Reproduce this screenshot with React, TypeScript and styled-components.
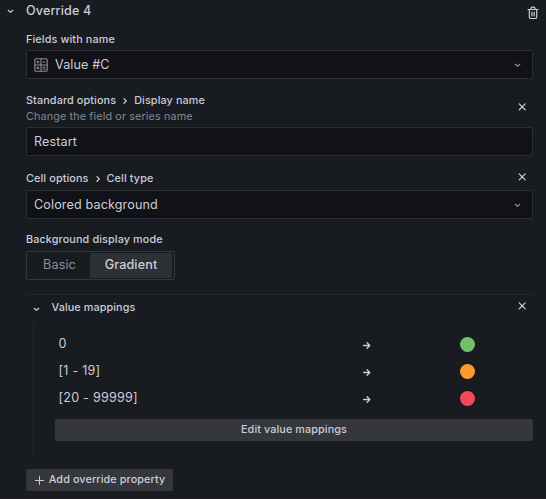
import React from "react";
import styled, { createGlobalStyle } from "styled-components";

const Global = createGlobalStyle`
  * { box-sizing: border-box; }
  body {
    margin: 0;
    background: #181b1f;
    color: #ccccdc;
    font-family: Inter, "Liberation Sans", sans-serif;
    font-size: 12.6px;
    letter-spacing: 0.01em;
  }
  button { font: inherit; letter-spacing: inherit; color: inherit; border: 0; padding: 0; background: none; }
  svg { display: block; flex: none; fill: none; stroke: currentColor; stroke-linecap: round; stroke-linejoin: round; }
`;

const Panel = styled.main`
  height: 499px;
  padding: 0 13px 0 26px;
  border-bottom: 1px solid #231f29;
  overflow: hidden;
`;

const Header = styled.header`
  display: flex;
  align-items: center;
  height: 21px;
  margin-left: -21px;
  font-weight: 500;
  > svg { margin-right: 10px; }
`;

const HeaderAction = styled.button`
  margin: 4px -6px 0 auto;
`;

const Label = styled.div<{ $top: number }>`
  display: flex;
  align-items: center;
  height: 16px;
  margin-top: ${(p) => p.$top}px;
  font-size: 10.8px;
  font-weight: 500;
  letter-spacing: 0.012em;
  svg { margin: 1px 2px 0 4px; }
`;

const PropertyHead = styled.div<{ $closeTop: number }>`
  display: flex;
  align-items: flex-start;
  justify-content: space-between;
  padding-right: 6px;
  > svg { margin-top: ${(p) => p.$closeTop}px; }
`;

const Description = styled.div`
  height: 16px;
  line-height: 17px;
  font-size: 10.8px;
  letter-spacing: 0.012em;
  color: #858794;
`;

const Field = styled.div<{ $top: number }>`
  display: flex;
  align-items: center;
  gap: 7px;
  height: 29px;
  margin-top: ${(p) => p.$top}px;
  padding: 0 9px 0 7px;
  border: 1px solid #2d2e34;
  border-radius: 2px;
  background: #111217;
`;

const FieldText = styled.span`
  flex: 1;
`;

const Muted = styled.span`
  display: flex;
  color: #8e8e9a;
`;

const RadioGroup = styled.div`
  display: flex;
  width: 149px;
  height: 29px;
  margin-top: 4px;
  padding: 1px 2px;
  border: 1px solid #34363c;
  border-radius: 2px;
`;

const Radio = styled.button<{ $active?: boolean }>`
  width: ${(p) => (p.$active ? 82 : 61)}px;
  height: 25px;
  padding-bottom: 2px;
  border-radius: 2px;
  background: ${(p) => (p.$active ? "#2d3035" : "transparent")};
  color: ${(p) => (p.$active ? "#ccccdc" : "#8e8e9a")};
  font-weight: ${(p) => (p.$active ? 500 : 400)};
`;

const Section = styled.section`
  margin-top: 14px;
  border-top: 1px solid #25282d;
`;

const SectionHead = styled.div`
  display: flex;
  align-items: center;
  height: 29px;
  padding: 0 6px 4px 5px;
  > svg:first-child { margin-top: 2px; }
  > svg:last-child { margin-bottom: 3px; }
`;

const SectionTitle = styled.span`
  flex: 1;
  margin-left: 9.5px;
  font-size: 10.8px;
  font-weight: 500;
  letter-spacing: 0.01em;
`;

const SectionBody = styled.div`
  height: 132px;
  margin-left: 7px;
  padding: 6px 0 0 21px;
  border-left: 1px solid #25282d;
`;

const MappingRow = styled.div`
  display: grid;
  grid-template-columns: 303px 99px 1fr;
  align-items: center;
  height: 27px;
  padding-left: 3.5px;
  letter-spacing: 0.017em;
  > svg { margin-top: 2px; }
`;

const Swatch = styled.span<{ $color: string }>`
  width: 15px;
  height: 15px;
  margin: 1px 0 0 -0.5px;
  border-radius: 50%;
  background: ${(p) => p.$color};
`;

const Button = styled.button<{ $wide?: boolean }>`
  display: flex;
  align-items: center;
  justify-content: center;
  width: ${(p) => (p.$wide ? "100%" : "147px")};
  height: 22px;
  margin-top: ${(p) => (p.$wide ? 8 : 13)}px;
  padding-bottom: 1px;
  border-radius: 2px;
  background: #35373c;
  font-size: 10.8px;
  font-weight: 500;
  letter-spacing: 0.01em;
  svg { margin: 1px 5px 0 0; }
`;

const Chevron = () => (
  <svg width="11" height="11" viewBox="0 0 11 11" strokeWidth="1.2"><path d="M3.2 5.3 5.5 7.4 7.8 5.3" /></svg>
);
const Separator = () => (
  <svg width="12" height="12" viewBox="0 0 12 12" strokeWidth="1.3"><path d="m4 3.6 2.3 2.3L4 8.2" /></svg>
);
const Close = () => (
  <svg width="10" height="10" viewBox="0 0 10 10" strokeWidth="1.3"><path d="m2.2 1.9 6 6M8.2 1.9l-6 6" /></svg>
);
const Arrow = () => (
  <svg width="10" height="10" viewBox="0 0 10 10" strokeWidth="1.3"><path d="M1.6 5.5h6M5.1 2.8l2.7 2.7-2.7 2.7" /></svg>
);
const Plus = () => (
  <svg width="10" height="10" viewBox="0 0 10 10" strokeWidth="1"><path d="M5.5 1.5v8M1.5 5.5h8" /></svg>
);
const Trash = () => (
  <svg width="12" height="14" viewBox="0 0 12 14" strokeWidth="1.2">
    <path d="M1 3.5h10M2.3 3.5v7.6q0 1.4 1.4 1.4h4.6q1.4 0 1.4-1.4V3.5M4 3.3V2.4Q4 1.1 5.2 1.1h1.6Q8 1.1 8 2.4v.9M4.9 6v4M7.1 6v4" />
  </svg>
);
const NumberGrid = () => (
  <svg width="14" height="14" viewBox="0 0 14 14" strokeWidth="1.1">
    <rect x=".8" y=".8" width="12.4" height="12.4" rx="1.3" />
    <path d="M7 1v12M1 7h12M2.9 4h2M3.9 3v2M9.1 4h2M2.9 9.9h2M3.9 9v2M9.1 9.2h2M9.1 11h2" />
  </svg>
);

const mappings = [
  { value: "0", color: "#73bf69" },
  { value: "[1 - 19]", color: "#ff9830" },
  { value: "[20 - 99999]", color: "#f2495c" },
];

export default function App() {
  return (
    <>
      <Global />
      <Panel>
        <Header>
          <Chevron />
          Override 4
          <HeaderAction aria-label="Remove override"><Trash /></HeaderAction>
        </Header>
        <Label $top={10}>Fields with name</Label>
        <Field $top={3}>
          <Muted><NumberGrid /></Muted>
          <FieldText>Value #C</FieldText>
          <Muted><Chevron /></Muted>
        </Field>
        <PropertyHead $closeTop={23}>
          <div>
            <Label $top={13}>Standard options<Separator />Display name</Label>
            <Description>Change the field or series name</Description>
          </div>
          <Close />
        </PropertyHead>
        <Field $top={3}><FieldText>Restart</FieldText></Field>
        <PropertyHead $closeTop={16}>
          <Label $top={14}>Cell options<Separator />Cell type</Label>
          <Close />
        </PropertyHead>
        <Field $top={4}>
          <FieldText>Colored background</FieldText>
          <Muted><Chevron /></Muted>
        </Field>
        <Label $top={12}>Background display mode</Label>
        <RadioGroup>
          <Radio>Basic</Radio>
          <Radio $active>Gradient</Radio>
        </RadioGroup>
        <Section>
          <SectionHead>
            <Chevron />
            <SectionTitle>Value mappings</SectionTitle>
            <Close />
          </SectionHead>
          <SectionBody>
            {mappings.map((m) => (
              <MappingRow key={m.value}>
                <span>{m.value}</span>
                <Arrow />
                <Swatch $color={m.color} />
              </MappingRow>
            ))}
            <Button $wide>Edit value mappings</Button>
          </SectionBody>
        </Section>
        <Button><Plus />Add override property</Button>
      </Panel>
    </>
  );
}
